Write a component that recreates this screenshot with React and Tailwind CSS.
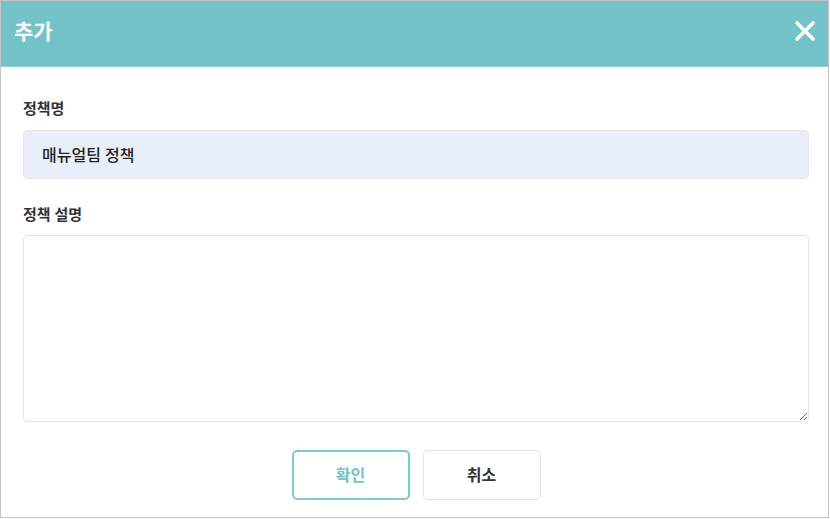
import React from 'react'

export default function App() {
  return (
    <div
      className="w-[830px] h-[519px] bg-white"
      style={{ fontFamily: '"Noto Sans", "Noto Sans CJK KR", sans-serif' }}
    >
      <div className="w-[829px] h-[518px] border border-[#c4c4c4] flex flex-col">
        {/* Header */}
        <div className="h-[66px] bg-[#72c2c8] flex items-center justify-between pl-[13px] pr-[11px] border-b border-[#8ccdd2]">
          <h1 className="text-[21px] font-bold text-white leading-none mb-[4px]">추가</h1>
          <button className="w-[24px] h-[24px] flex items-center justify-center mb-[6px]">
            <svg width="22" height="22" viewBox="0 0 22 22" fill="none">
              <path d="M3 3 L19 19 M19 3 L3 19" stroke="white" strokeWidth="3.6" strokeLinecap="round" />
            </svg>
          </button>
        </div>

        {/* Body */}
        <div className="flex flex-col pl-[22px] pr-[19px] pt-[34px]">
          <label className="text-[15px] font-bold text-[#333] leading-none">정책명</label>
          <div className="mt-[14px] h-[49px] rounded-[5px] border border-[#e3e6ec] bg-[#e9effa] flex items-center px-[18px]">
            <span className="text-[16px] font-medium text-[#222]">매뉴얼팀 정책</span>
          </div>

          <label className="mt-[28px] text-[15px] font-bold text-[#333] leading-none">정책 설명</label>
          <textarea className="mt-[13px] h-[187px] rounded-[5px] border border-[#e2e2e2] bg-white outline-none p-3 text-[15px]" />

          <div className="flex justify-center gap-[13px] mt-[28px]">
            <button className="w-[118px] h-[50px] rounded-[5px] border-2 border-[#7ccbd0] text-[#6fc2c7] text-[16px] font-bold">
              확인
            </button>
            <button className="w-[118px] h-[50px] rounded-[5px] border border-[#e2e2e2] text-[#333] text-[16px] font-bold">
              취소
            </button>
          </div>
        </div>
      </div>
    </div>
  )
}
